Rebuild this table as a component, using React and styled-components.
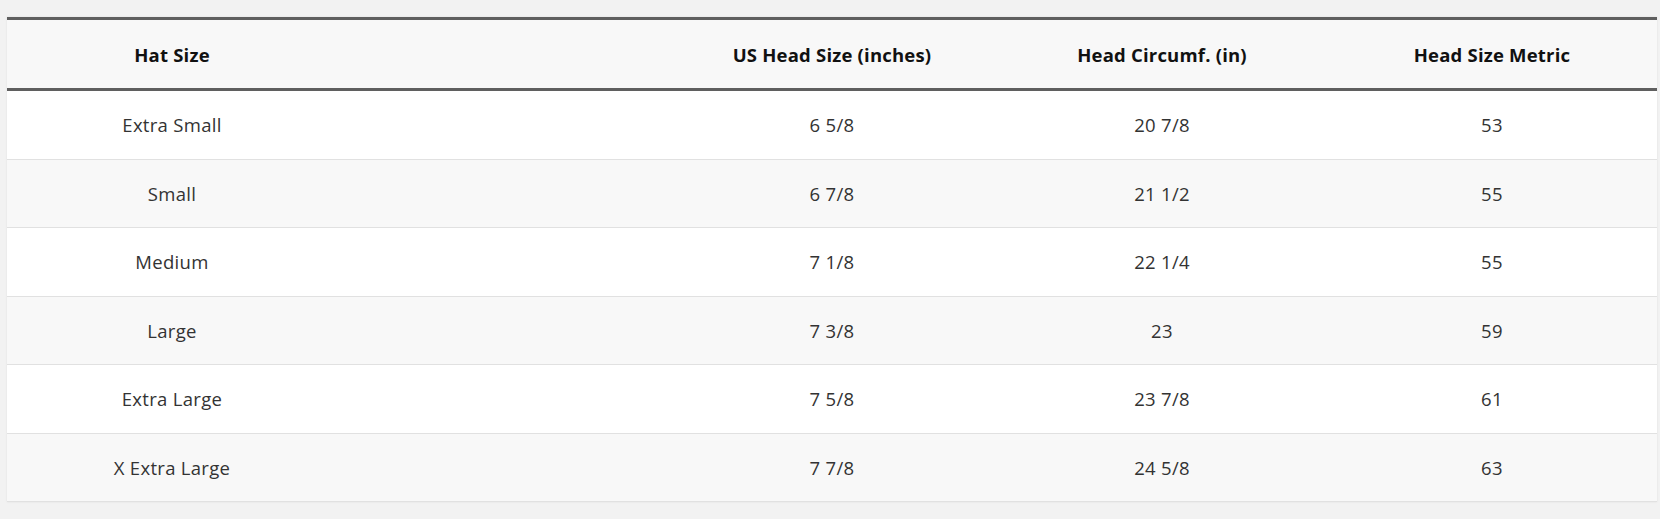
import React from 'react';
import styled, { createGlobalStyle } from 'styled-components';

const GlobalStyle = createGlobalStyle`
	html, body {
		margin: 0;
		padding: 0;
		background: #f2f2f2;
	}
	body {
		font-family: 'Open Sans', 'Liberation Sans', sans-serif;
	}
`;

const Page = styled.div`
	padding: 17px 3px 16px 7px;
`;

const Table = styled.table`
	width: 100%;
	border-collapse: collapse;
	table-layout: fixed;
	background: #fff;
	box-shadow: 0 0 2px rgba(0, 0, 0, 0.08);
	thead tr {
		background: #f8f8f8;
		border-top: 3px solid #5f5f5f;
		border-bottom: 3px solid #5f5f5f;
	}
	th {
		height: 68px;
		padding: 0;
		font-size: 18.5px;
		font-weight: 700;
		color: #111;
		text-align: center;
		letter-spacing: 0.2px;
	}
`;

const Row = styled.tr`
	background: ${p => (p.$shade ? '#f8f8f8' : '#fff')};
	border-bottom: 1px solid #e1e1e1;
	td {
		height: 67.5px;
		padding: 0;
		font-size: 18.5px;
		color: #333;
		text-align: center;
		letter-spacing: 0.3px;
	}
`;

const rows = [
	['Extra Small', '6 5/8', '20 7/8', '53'],
	['Small', '6 7/8', '21 1/2', '55'],
	['Medium', '7 1/8', '22 1/4', '55'],
	['Large', '7 3/8', '23', '59'],
	['Extra Large', '7 5/8', '23 7/8', '61'],
	['X Extra Large', '7 7/8', '24 5/8', '63'],
];

const App = () => (
	<Page>
		<GlobalStyle />
		<Table>
			<thead>
				<tr>
					<th>Hat Size</th>
					<th />
					<th>US Head Size (inches)</th>
					<th>Head Circumf. (in)</th>
					<th>Head Size Metric</th>
				</tr>
			</thead>
			<tbody>
				{rows.map((r, i) => (
					<Row key={i} $shade={i % 2 === 1}>
						<td>{r[0]}</td>
						<td />
						<td>{r[1]}</td>
						<td>{r[2]}</td>
						<td>{r[3]}</td>
					</Row>
				))}
			</tbody>
		</Table>
	</Page>
);

export default App;
